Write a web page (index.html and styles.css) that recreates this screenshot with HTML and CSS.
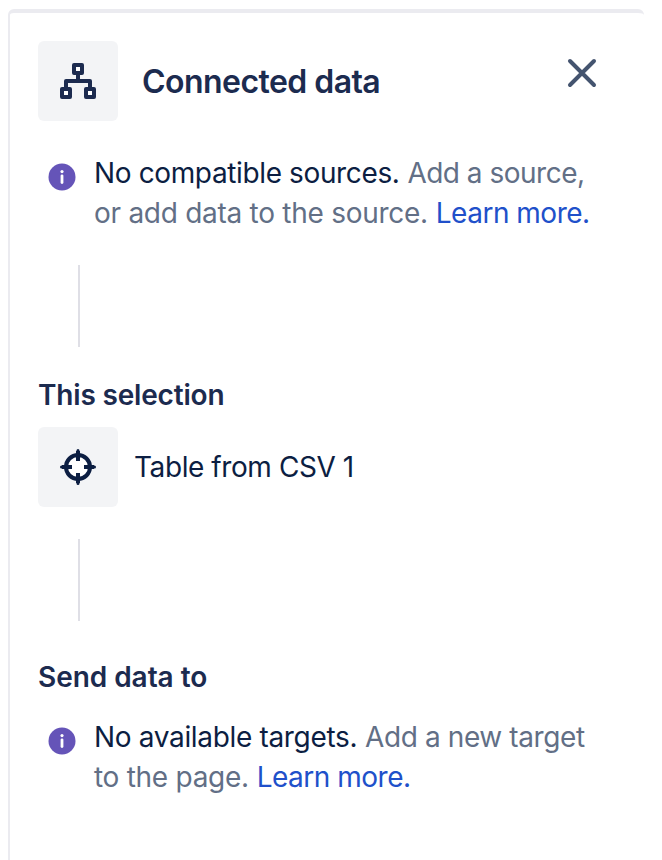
FILE: index.html
```html
<!DOCTYPE html>
<html lang="en">
<head>
<meta charset="utf-8">
<title>Connected data</title>
<link rel="stylesheet" href="styles.css">
</head>
<body>
<aside class="panel">
  <header class="header">
    <span class="tile">
      <svg width="40" height="40" viewBox="0 0 40 40" fill="none" stroke="#1c2b4f" stroke-width="4" stroke-linejoin="round">
        <rect x="16" y="4" width="8" height="8"/>
        <rect x="4" y="28" width="8" height="8"/>
        <rect x="28" y="28" width="8" height="8"/>
        <path d="M20 13v7M8 27v-7h24v7"/>
        <path d="M18 6h4v4h-4zM6 30h4v4H6zM30 30h4v4h-4z" fill="#fff" stroke="none"/>
      </svg>
    </span>
    <h1 class="title">Connected data</h1>
    <button class="close" type="button" aria-label="Close">
      <svg width="32" height="32" viewBox="0 0 32 32" fill="none" stroke="#44546f" stroke-width="4" stroke-linecap="round"><path d="M4 4l24 24M28 4L4 28"/></svg>
    </button>
  </header>
  <div class="notice">
    <svg class="info" width="28" height="28" viewBox="0 0 28 28"><circle cx="14" cy="14" r="13.5" fill="#6554b8"/><circle cx="14" cy="8.6" r="1.6" fill="#fff"/><path d="M14 12.8v6.8" stroke="#fff" stroke-width="2.8" stroke-linecap="round"/></svg>
    <p class="message">
      <span class="line"><span class="strong sources">No compatible sources.</span> <span class="add-source">Add a source,</span></span>
      <span class="line"><span class="add-data">or add data to the source.</span> <a class="link">Learn more.</a></span>
    </p>
  </div>
  <div class="connector"></div>
  <h2 class="heading selection">This selection</h2>
  <div class="item">
    <span class="tile">
      <svg width="40" height="40" viewBox="0 0 40 40" fill="none" stroke="#0c1e42" stroke-width="4"><circle cx="20" cy="20" r="12" fill="#fff"/><path d="M20 4v10M20 26v10M4 20h10M26 20h10"/><path d="M20 3.5v2M20 34.5v2M3.5 20h2M34.5 20h2" stroke-width="3" stroke-linecap="round"/></svg>
    </span>
    <span class="name">Table from CSV 1</span>
  </div>
  <div class="connector"></div>
  <h2 class="heading send">Send data to</h2>
  <div class="notice targets">
    <svg class="info" width="28" height="28" viewBox="0 0 28 28"><circle cx="14" cy="14" r="13.5" fill="#6554b8"/><circle cx="14" cy="8.6" r="1.6" fill="#fff"/><path d="M14 12.8v6.8" stroke="#fff" stroke-width="2.8" stroke-linecap="round"/></svg>
    <p class="message">
      <span class="line"><span class="strong available">No available targets.</span> <span class="add-target">Add a new target</span></span>
      <span class="line"><span class="page">to the page.</span> <a class="link">Learn more.</a></span>
    </p>
  </div>
</aside>
</body>
</html>
```
FILE: styles.css
```css
* { box-sizing: border-box; }
body {
  margin: 0;
  height: 860px;
  padding: 9px 18px 0 8px;
  overflow: hidden;
  background: #fff;
  font-family: Inter, "Liberation Sans", sans-serif;
  font-size: 28px;
  line-height: 40px;
  color: #0c1e42;
}
.panel {
  height: 870px;
  padding: 28px 28px 0;
  border-top: 4px solid #ebebf0;
  border-left: 2px solid #ebebf0;
  border-radius: 6px 6px 0 0;
}
.header, .item { display: flex; align-items: center; }
.tile {
  display: flex;
  flex: none;
  align-items: center;
  justify-content: center;
  width: 80px;
  height: 80px;
  border-radius: 6px;
  background: #f3f4f6;
}
.title {
  margin: 0 0 0 24px;
  padding-top: 2px;
  font-size: 32px;
  font-weight: 600;
  letter-spacing: -0.55px;
  color: #1c2b4f;
  white-space: nowrap;
}
.close {
  display: flex;
  margin: -16px 18px 0 auto;
  padding: 0;
  border: 0;
  background: none;
}
.notice { display: flex; gap: 18px; margin-top: 32px; padding-left: 10px; }
.info { flex: none; margin-top: 10px; }
.message { margin: 0; color: #626f86; }
.line { display: block; white-space: nowrap; }
.strong { color: #0c1e42; }
.sources { letter-spacing: -0.37px; }
.add-source { letter-spacing: -0.5px; }
.add-data { letter-spacing: -0.27px; }
.available { letter-spacing: -0.33px; }
.add-target { letter-spacing: -0.4px; }
.page { letter-spacing: -0.28px; }
.link { color: #2050ca; letter-spacing: -0.5px; }
.connector { width: 2px; height: 82px; margin: 32px 0 0 40px; background: #dfdfe6; }
.heading {
  margin: 28px 0 0;
  font-size: 28px;
  font-weight: 600;
  color: #1c2b4f;
}
.selection { letter-spacing: -0.18px; }
.item { margin-top: 12px; }
.name { margin-left: 16px; letter-spacing: -0.42px; white-space: nowrap; }
.send { margin-top: 36px; letter-spacing: -0.05px; }
.targets { margin-top: 20px; }
```
